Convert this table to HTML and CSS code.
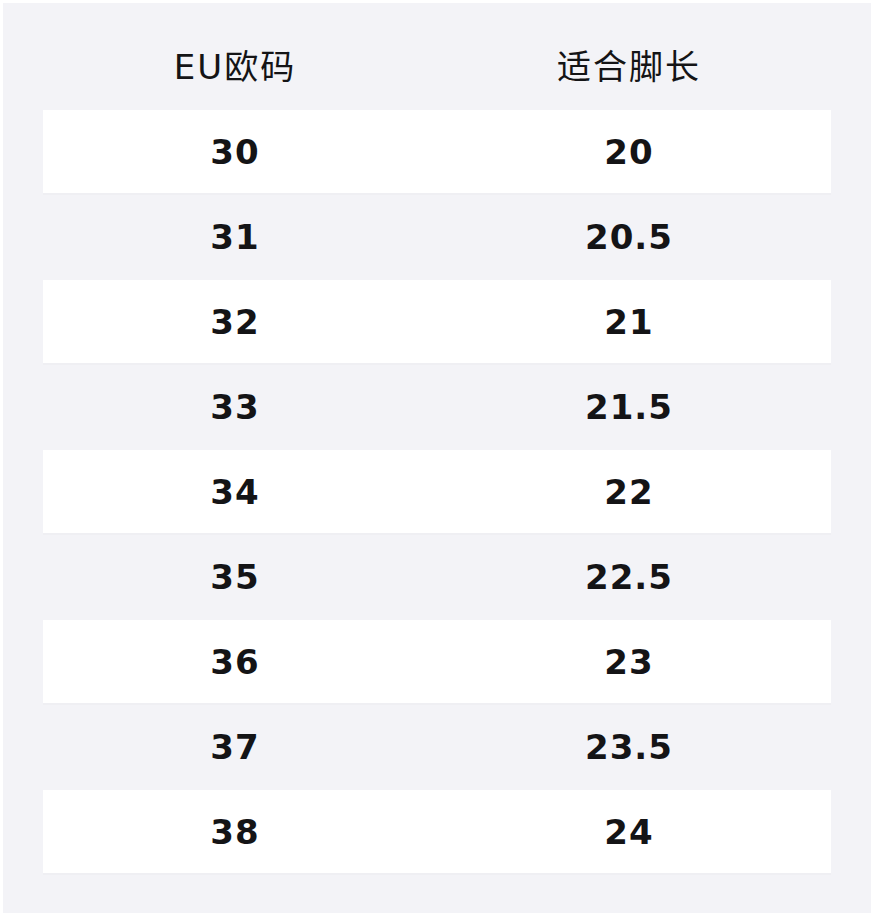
FILE: index.html
```html
<!DOCTYPE html>
<html lang="zh-CN">
<head>
<meta charset="utf-8">
<title>尺码表</title>
<link rel="stylesheet" href="styles.css">
</head>
<body>
<div class="card">
  <div class="row head"><div class="cell">EU欧码</div><div class="cell">适合脚长</div></div>
  <div class="row white"><div class="cell">30</div><div class="cell">20</div></div>
  <div class="row"><div class="cell">31</div><div class="cell">20.5</div></div>
  <div class="row white"><div class="cell">32</div><div class="cell">21</div></div>
  <div class="row"><div class="cell">33</div><div class="cell">21.5</div></div>
  <div class="row white"><div class="cell">34</div><div class="cell">22</div></div>
  <div class="row"><div class="cell">35</div><div class="cell">22.5</div></div>
  <div class="row white"><div class="cell">36</div><div class="cell">23</div></div>
  <div class="row"><div class="cell">37</div><div class="cell">23.5</div></div>
  <div class="row white"><div class="cell">38</div><div class="cell">24</div></div>
</div>
</body>
</html>
```
FILE: styles.css
```css
html, body {
  margin: 0;
  padding: 0;
  background: #ffffff;
}
.card {
  box-sizing: border-box;
  margin: 3px;
  width: 868px;
  height: 910px;
  padding: 20px 40px 38px;
  background: #f3f3f7;
  color: #141416;
  font-family: "DejaVu Sans", "Noto Sans CJK SC", sans-serif;
}
.row {
  display: grid;
  grid-template-columns: 1fr 1fr;
  height: 85px;
  box-sizing: border-box;
  border-bottom: 2px solid transparent;
  font-size: 34px;
  font-weight: bold;
  letter-spacing: 1px;
}
.row.white {
  background: #ffffff;
  border-bottom-color: #efeff3;
}
.row.head {
  height: 87px;
  border-bottom: 0;
  font-size: 34px;
  font-weight: normal;
  letter-spacing: 2px;
}
.cell {
  display: flex;
  align-items: center;
  justify-content: center;
  padding-right: 10px;
}
.head .cell {
  padding-bottom: 5px;
}
```
